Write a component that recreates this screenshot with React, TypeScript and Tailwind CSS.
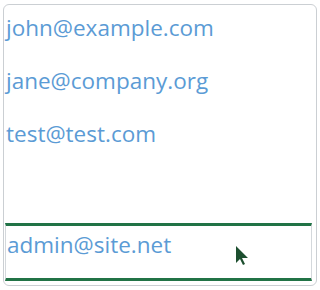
import React from 'react';

const emails = ['john@example.com', 'jane@company.org', 'test@test.com'];

const Cursor: React.FC = () => (
  <svg width="14" height="19" viewBox="0 0 14 19" className="absolute left-[235px] top-[246px]">
    <path d="M1 0 L1 17 L5 13 L8 19 L10 18 L7 12 L13 12 Z" fill="#1d4f2f" />
  </svg>
);

export default function App() {
  return (
    <div className="relative w-[320px] h-[290px] bg-white pl-[3px] pt-[4px]" style={{ fontFamily: '"Open Sans", sans-serif' }}>
      <div className="w-[314px] h-[282px] rounded-md border border-[#cbcfd3] pl-[1px] pr-[4px] flex flex-col">
        {emails.map(e => (
          <div key={e} className="h-[53px] shrink-0 border-y-[3px] border-transparent pl-[1px] pt-[5px] text-[22.5px] leading-[30px] text-[#5b9bd5]">
            {e}
          </div>
        ))}
        <div className="h-[58px] mt-auto mb-[4px] shrink-0 border-y-[3px] border-[#217346] border-x border-x-[#d4d8dc] pl-[1px] pt-[4px] text-[22.5px] leading-[30px] text-[#5b9bd5]">
          admin@site.net
        </div>
      </div>
      <Cursor />
    </div>
  );
}
